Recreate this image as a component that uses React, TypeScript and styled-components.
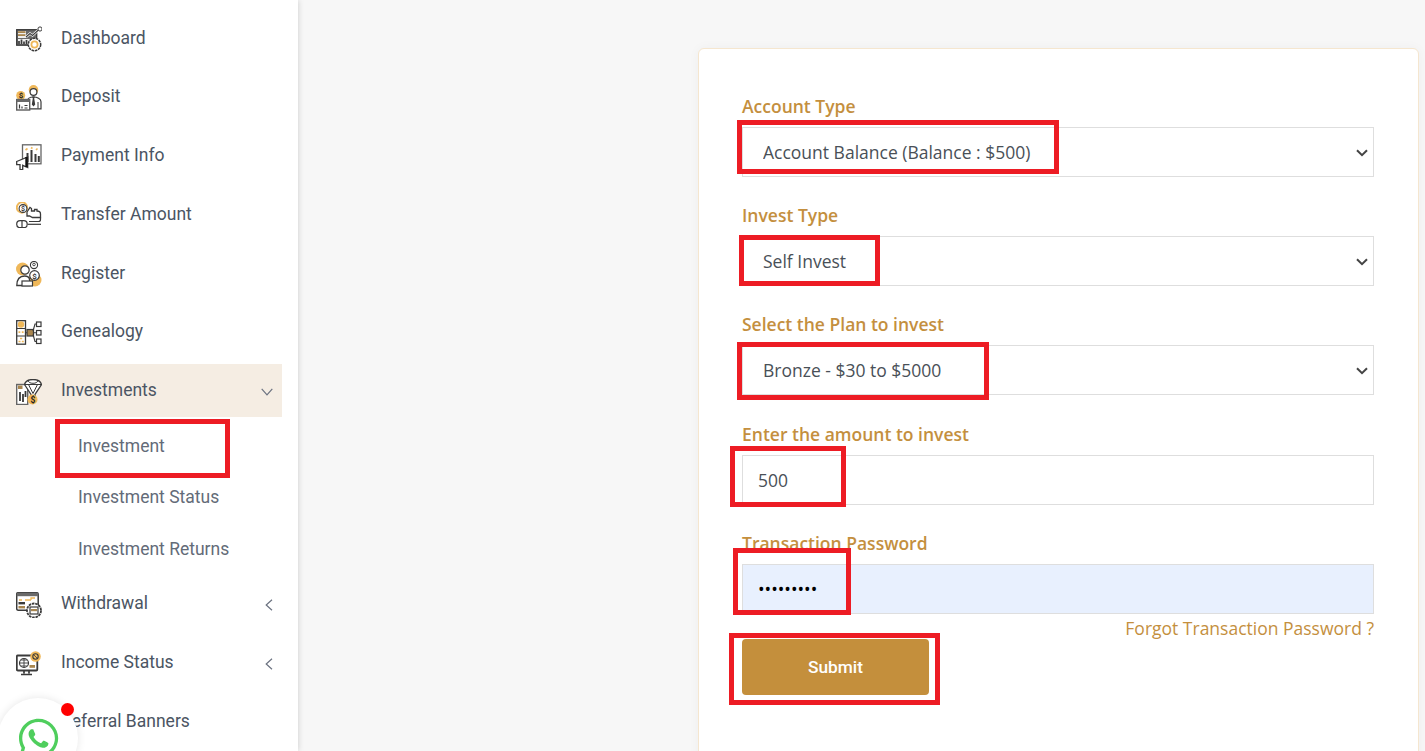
import React from "react";
import styled, { createGlobalStyle } from "styled-components";
import { FaWhatsapp } from "react-icons/fa";

const DARK = "#3a3a3a";
const GREY = "#5c5c5c";
const GOLD = "#efb85a";
const TAN = "#a9864f";

const DashboardIcon = () => (
  <IconSvg viewBox="0 0 26 26">
    <rect x="0.700" y="3.700" width="20" height="15.500" fill="#6a6a6a" stroke={DARK} strokeWidth="1.300" />
    <rect x="2" y="5" width="8" height="7" fill="#eee" />
    <rect x="2" y="5.200" width="7.500" height="1.800" fill={TAN} />
    <rect x="2" y="8.200" width="7.500" height="1.800" fill={TAN} />
    <rect x="2" y="13" width="12" height="5" fill="#eee" />
    <path d="M3 18v-3M5.500 18v-4.500M8 18v-2.500M10.500 18v-4" stroke={DARK} strokeWidth="1.700" />
    <path d="M10 11l4-3.500 2.500 2L23 3.500" fill="none" stroke="#fff" strokeWidth="2.400" />
    <path d="M10 11l4-3.500 2.500 2L23 3.500" fill="none" stroke={DARK} strokeWidth="1.100" />
    <circle cx="24" cy="3" r="2.100" fill="#fff" stroke={DARK} />
    <circle cx="18.500" cy="18.500" r="6.200" fill="#fff" stroke={DARK} strokeWidth="1.500" strokeDasharray="2.600 .7" />
    <circle cx="18.500" cy="18.500" r="3.100" fill="#fff" stroke={GOLD} strokeWidth="1.800" />
  </IconSvg>
);

const DepositIcon = () => (
  <IconSvg viewBox="0 0 26 26">
    <circle cx="4.700" cy="10.500" r="4.500" fill={GOLD} />
    <text x="2.700" y="13.300" fontSize="8" fontWeight="700" fill="#222" fontFamily="Roboto, sans-serif">$</text>
    <circle cx="17.500" cy="4.800" r="4.800" fill={GOLD} />
    <circle cx="17.500" cy="7" r="3.400" fill="#fff" stroke={DARK} strokeWidth="1.200" />
    <path d="M11 23.800v-7c0-3 3-4.800 6.500-4.800s7.500 1.800 7.500 4.800v7z" fill="#fff" stroke={DARK} strokeWidth="1.200" />
    <path d="M16 11.500h3l-.8 2 1 6-1.700 2-1.700-2 1-6z" fill={DARK} />
    <path d="M22 17v6.500" stroke={DARK} />
    <rect x="0.700" y="14.500" width="13" height="10.500" fill="#fff" stroke={GREY} strokeWidth="1.400" />
    <rect x="0.700" y="14.500" width="13" height="2.500" fill="#6a6a6a" />
    <path d="M3.500 23.500v-4M6 23.500v-2M8.500 23h3M8.500 20.500h3" stroke={DARK} strokeWidth="1.200" />
  </IconSvg>
);

const PaymentIcon = () => (
  <IconSvg viewBox="0 0 26 26">
    <rect x="6.500" y="0.800" width="18.500" height="19" fill="#fff" stroke="#666" strokeWidth="1.300" />
    <path d="M11.500 18V9M15.500 18V6M19.500 18v-8M22.800 18v-6" stroke={DARK} strokeWidth="2" />
    <path d="M9.500 6l2-1.500M15 3.500l1.500 1M20 6l1.500-1.500" stroke={GOLD} strokeWidth="1.600" />
    <path d="M0.700 17.500l11-4.500v10.500l-5-2.200v4.400H4v-5H0.700z" fill="#fff" stroke={DARK} strokeWidth="1.300" />
    <path d="M10.500 13v10" stroke="#111" strokeWidth="2.400" />
  </IconSvg>
);

const TransferIcon = () => (
  <IconSvg viewBox="0 0 26 26">
    <circle cx="6" cy="5.500" r="5.200" fill="#fff" stroke={GOLD} strokeWidth="1.900" />
    <circle cx="7" cy="6.500" r="3.900" fill="#fff" stroke={DARK} strokeWidth="1.100" />
    <text x="5" y="9.200" fontSize="7" fontWeight="500" fill="#222" fontFamily="Roboto, sans-serif">$</text>
    <path d="M11 10l3-4.500 1.500 1V9h3V7.500h2.500V9c2.500 0 3.500 1 3.500 3v3.500h-8l-3-1.500h-2.500z" fill="#fff" stroke={DARK} strokeWidth="1.300" />
    <path d="M24.500 15.500v2c0 1.500-1 2-2 2H13" fill="none" stroke={DARK} strokeWidth="1.200" />
    <path d="M11.500 22.300H25" stroke={DARK} strokeWidth="1.200" />
    <rect x="0.700" y="18.700" width="10.500" height="7" rx="3.500" fill="#fff" stroke={DARK} strokeWidth="1.200" />
    <path d="M6 18.700v7" stroke={DARK} strokeWidth="1.200" />
  </IconSvg>
);

const RegisterIcon = () => (
  <IconSvg viewBox="0 0 26 26">
    <circle cx="6.500" cy="8" r="6.500" fill={GOLD} />
    <circle cx="19" cy="19" r="6.500" fill={GOLD} />
    <circle cx="9" cy="9" r="4.200" fill="#fff" stroke={DARK} strokeWidth="1.200" />
    <path d="M0.800 24.500c0-6 3-9.500 8-9.500s5 3 5 9.500z" fill="#fff" stroke={DARK} strokeWidth="1.300" />
    <rect x="6" y="20" width="10.500" height="5" fill="#fff" stroke={DARK} strokeWidth="1.200" />
    <circle cx="18" cy="4" r="3.600" fill="#fff" stroke={DARK} strokeWidth="1.100" />
    <circle cx="18" cy="3.500" r="1.300" fill="none" stroke={DARK} strokeWidth=".9" />
    <circle cx="18.500" cy="14.500" r="4.800" fill="#fff" stroke={DARK} strokeWidth="1.200" />
    <text x="16.300" y="17.500" fontSize="8" fontWeight="500" fill="#222" fontFamily="Roboto, sans-serif">$</text>
  </IconSvg>
);

const GenealogyIcon = () => (
  <IconSvg viewBox="0 0 26 26">
    <rect x="0.700" y="0.700" width="8.800" height="23.500" fill="#fff" stroke={DARK} strokeWidth="1.300" />
    <path d="M0.700 8.500h8.800M0.700 16h8.800" stroke={DARK} strokeWidth="1.200" />
    <circle cx="5" cy="4.500" r="3.200" fill={GOLD} />
    <path d="M2.500 12.200h1.800M5.800 12.200h1.800M4 18.500h2.200M2.500 21.500h2M5.800 21.500h2" stroke={GOLD} strokeWidth="1.700" />
    <rect x="11" y="9.500" width="6.500" height="6.500" fill={TAN} stroke={DARK} strokeWidth="1.200" />
    <path d="M9 12.700h2M17 12.700h3.500M17 11l2-7h1.500M17 14.500l2 7h1.500" fill="none" stroke={DARK} strokeWidth="1.100" />
    <rect x="20.500" y="2" width="4.500" height="4.500" fill="#fff" stroke={DARK} strokeWidth="1.200" />
    <rect x="20.500" y="10.500" width="4.500" height="4.500" fill="#fff" stroke={DARK} strokeWidth="1.200" />
    <rect x="20.500" y="19" width="4.500" height="4.500" fill="#fff" stroke={DARK} strokeWidth="1.200" />
  </IconSvg>
);

const InvestmentsIcon = () => (
  <IconSvg viewBox="0 0 26 26">
    <rect x="0.700" y="5.500" width="11" height="20" fill="#fff" stroke="#666" strokeWidth="1.400" />
    <rect x="2" y="6.500" width="4.500" height="3.500" fill={TAN} />
    <path d="M4 13v9M7 15v8M9.500 12v6" stroke={DARK} strokeWidth="1.800" />
    <path d="M8.500 5.500c1-4 5-5 8.500-5s7.500 1 8.500 5l-6.500 10v4h-4v-4z" fill="#fff" stroke={DARK} strokeWidth="1.300" />
    <path d="M8.500 5.500h17M12.500 5.500l4.500 9 4.500-9M12 1.800c1 1.500 2 2.500 5 2.500s4-1 5-2.500" fill="none" stroke={DARK} strokeWidth="1" />
    <circle cx="16.500" cy="20.500" r="5" fill={GOLD} />
    <text x="14.400" y="23.500" fontSize="8.500" fontWeight="700" fill="#222" fontFamily="Roboto, sans-serif">$</text>
  </IconSvg>
);

const WithdrawalIcon = () => (
  <IconSvg viewBox="0 0 26 26">
    <rect x="0.700" y="0.700" width="21.500" height="17.500" rx="1.500" fill="#fff" stroke={DARK} strokeWidth="1.500" />
    <rect x="0.700" y="0.700" width="21.500" height="3.500" fill="#6a6a6a" />
    <path d="M3 8h3M9 8h6M15 8V6h4" fill="none" stroke={GOLD} strokeWidth="1.300" />
    <rect x="2.500" y="10" width="6.500" height="2.400" fill={DARK} />
    <rect x="2.500" y="14" width="6.500" height="2.400" fill={TAN} />
    <circle cx="18" cy="18.500" r="7" fill="#fff" stroke={DARK} strokeWidth="1.800" strokeDasharray="2.600 .8" />
    <rect x="14" y="15" width="8" height="7" fill="#fff" stroke={DARK} strokeWidth="1.200" />
    <rect x="15" y="17" width="6" height="2.200" fill={TAN} />
  </IconSvg>
);

const IncomeIcon = () => (
  <IconSvg viewBox="0 0 26 26">
    <rect x="0.800" y="4.500" width="20.500" height="15" rx="1" fill="#fff" stroke={DARK} strokeWidth="1.800" />
    <circle cx="8" cy="12" r="4.500" fill="none" stroke={DARK} strokeWidth="1.200" />
    <path d="M3.500 12h9M8 7.500v9M5 9h6M5 15h6" stroke={DARK} strokeWidth=".9" />
    <rect x="13.500" y="14" width="5.500" height="2.800" fill={TAN} />
    <path d="M8 19.500v3M13 19.500v3M5 23.500h11" stroke={DARK} strokeWidth="1.700" />
    <circle cx="19.500" cy="5.500" r="5.300" fill={GOLD} />
    <circle cx="19.500" cy="5.500" r="2.700" fill="none" stroke={DARK} strokeWidth="1.100" />
    <path d="M18 4l3 3" stroke={DARK} strokeWidth=".8" />
  </IconSvg>
);

const ChevronDown = () => (
  <ChevronSvg viewBox="0 0 12 8" $w={12} $h={8}>
    <path d="M0.700 0.800L6 6.800l5.300-6" />
  </ChevronSvg>
);

const ChevronLeft = () => (
  <ChevronSvg viewBox="0 0 8 12" $w={8} $h={12}>
    <path d="M7 0.800L1.200 6 7 11.200" />
  </ChevronSvg>
);

const SelectField: React.FC<{ label: string; option: string }> = ({ label, option }) => (
  <Field>
    <Label>{label}</Label>
    <SelectWrap>
      <Select defaultValue={option}>
        <option value={option}>{option}</option>
      </Select>
      <SelectArrow viewBox="0 0 12 8">
        <path d="M1 1.200l5 5 5-5" />
      </SelectArrow>
    </SelectWrap>
  </Field>
);

const beforeSub = [
  { label: "Dashboard", icon: <DashboardIcon /> },
  { label: "Deposit", icon: <DepositIcon /> },
  { label: "Payment Info", icon: <PaymentIcon /> },
  { label: "Transfer Amount", icon: <TransferIcon /> },
  { label: "Register", icon: <RegisterIcon /> },
  { label: "Genealogy", icon: <GenealogyIcon /> },
];

const subItems = ["Investment", "Investment Status", "Investment Returns"];

const marks = [
  { x: 55, y: 419, w: 175, h: 59 },
  { x: 737, y: 120, w: 322, h: 54 },
  { x: 739, y: 235, w: 141, h: 51 },
  { x: 737, y: 342, w: 252, h: 58 },
  { x: 730, y: 446, w: 116, h: 61 },
  { x: 733, y: 548, w: 118, h: 67 },
  { x: 729, y: 633, w: 211, h: 72 },
];

const App: React.FC = () => {
  return (
    <Page>
      <GlobalStyle />
      <Sidebar>
        {beforeSub.map((item) => (
          <NavRow key={item.label}>
            <IconSlot>{item.icon}</IconSlot>
            <NavLabel>{item.label}</NavLabel>
          </NavRow>
        ))}
        <NavRow $active>
          <IconSlot>
            <InvestmentsIcon />
          </IconSlot>
          <NavLabel>Investments</NavLabel>
          <ChevronDown />
        </NavRow>
        <SubList>
          {subItems.map((item) => (
            <SubItem key={item}>{item}</SubItem>
          ))}
        </SubList>
        <NavRow>
          <IconSlot>
            <WithdrawalIcon />
          </IconSlot>
          <NavLabel>Withdrawal</NavLabel>
          <ChevronLeft />
        </NavRow>
        <NavRow>
          <IconSlot>
            <IncomeIcon />
          </IconSlot>
          <NavLabel>Income Status</NavLabel>
          <ChevronLeft />
        </NavRow>
        <NavRow>
          <IconSlot />
          <NavLabel>Referral Banners</NavLabel>
        </NavRow>
      </Sidebar>

      <Main>
        <Card>
          <SelectField label="Account Type" option="Account Balance (Balance : $500)" />
          <SelectField label="Invest Type" option="Self Invest" />
          <SelectField label="Select the Plan to invest" option="Bronze - $30 to $5000" />
          <Field>
            <Label>Enter the amount to invest</Label>
            <Input type="text" defaultValue="500" />
          </Field>
          <Field $last>
            <Label>Transaction Password</Label>
            <Input type="password" defaultValue="123456789" $filled />
          </Field>
          <Forgot>Forgot Transaction Password ?</Forgot>
          <Submit type="button">Submit</Submit>
        </Card>
      </Main>

      {marks.map((m) => (
        <RedMark key={m.x + "-" + m.y} $x={m.x} $y={m.y} $w={m.w} $h={m.h} />
      ))}

      <ChatBubble>
        <FaWhatsapp size={45} color="#4fce5d" />
      </ChatBubble>
      <ChatDot />
    </Page>
  );
};

export default App;

const GlobalStyle = createGlobalStyle`
  html, body {
    margin: 0;
    padding: 0;
    background: #f7f7f7;
  }
  * {
    box-sizing: border-box;
  }
`;

const Page = styled.div`
  position: relative;
  display: flex;
  width: 1425px;
  height: 751px;
  overflow: hidden;
  background: #f7f7f7;
`;

const Sidebar = styled.aside`
  flex: none;
  width: 298px;
  padding: 11px 16px 0 0;
  background: #fff;
  box-shadow: 0 0 6px rgba(0, 0, 0, 0.18);
  z-index: 1;
`;

const NavRow = styled.div<{ $active?: boolean }>`
  display: flex;
  align-items: center;
  height: 53px;
  margin-bottom: ${(p) => (p.$active ? "0" : "5.800px")};
  padding-left: 16px;
  background: ${(p) => (p.$active ? "#f5ede3" : "transparent")};
`;

const IconSlot = styled.span`
  display: flex;
  flex: none;
  width: 45px;
  margin-top: 3px;
`;

const IconSvg = styled.svg`
  display: block;
  width: 26px;
  height: 26px;
`;

const NavLabel = styled.span`
  flex: 1;
  padding-top: 1.500px;
  font: 400 17.500px/1 Roboto, sans-serif;
  color: #4b5563;
`;

const ChevronSvg = styled.svg<{ $w: number; $h: number }>`
  flex: none;
  width: ${(p) => p.$w}px;
  height: ${(p) => p.$h}px;
  margin: 4px 9px 0 0;
  fill: none;
  stroke: #6b7280;
  stroke-width: 1.200;
`;

const SubList = styled.div`
  padding: 3px 0 2.500px;
`;

const SubItem = styled.div`
  display: flex;
  align-items: center;
  height: 51.500px;
  padding: 2px 0 0 78px;
  font: 400 17.500px/1 Roboto, sans-serif;
  color: #636b78;
`;

const Main = styled.main`
  flex: 1;
  padding: 48px 6px 0 400px;
`;

const Card = styled.section`
  height: 760px;
  padding: 46px 44px 0 43px;
  background: #fff;
  border: 1px solid #f5e6cf;
  border-radius: 6px;
  box-shadow: 0 0 12px rgba(0, 0, 0, 0.04);
`;

const Field = styled.div<{ $last?: boolean }>`
  margin-bottom: ${(p) => (p.$last ? "0" : "27.200px")};
`;

const Label = styled.label`
  display: block;
  height: 25px;
  margin-bottom: 7px;
  font: 600 17.500px/23.600px "Open Sans", sans-serif;
  color: #c48f3e;
`;

const SelectWrap = styled.div`
  position: relative;
`;

const Select = styled.select`
  display: block;
  width: 100%;
  height: 50px;
  padding: 0 32px 0 20px;
  font: 400 17.500px "Open Sans", sans-serif;
  color: #495057;
  background: #fff;
  border: 1px solid #dedede;
  border-radius: 0;
  outline: none;
  appearance: none;
`;

const SelectArrow = styled.svg`
  position: absolute;
  right: 6px;
  top: 22px;
  width: 12px;
  height: 8px;
  fill: none;
  stroke: #444;
  stroke-width: 2;
  pointer-events: none;
`;

const Input = styled.input<{ $filled?: boolean }>`
  display: block;
  width: 100%;
  height: 50px;
  padding: 0 15px;
  font: 400 17.500px "Open Sans", sans-serif;
  color: ${(p) => (p.$filled ? "#000" : "#495057")};
  background: ${(p) => (p.$filled ? "#e8f0fe" : "#fff")};
  border: 1px solid #dedede;
  border-radius: 0;
  outline: none;
`;

const Forgot = styled.div`
  margin-top: 4px;
  font: 400 17.500px/20px "Open Sans", sans-serif;
  color: #c48f3e;
  text-align: right;
`;

const Submit = styled.button`
  display: block;
  width: 187px;
  height: 56px;
  margin-top: 1px;
  padding: 0;
  font: 500 17.300px Roboto, sans-serif;
  color: #fff;
  background: #c48f3c;
  border: none;
  border-radius: 4px;
`;

const RedMark = styled.div<{ $x: number; $y: number; $w: number; $h: number }>`
  position: absolute;
  left: ${(p) => p.$x}px;
  top: ${(p) => p.$y}px;
  width: ${(p) => p.$w}px;
  height: ${(p) => p.$h}px;
  border: 5px solid #ed1c24;
  z-index: 2;
`;

const ChatBubble = styled.div`
  position: absolute;
  left: -2px;
  top: 698px;
  display: flex;
  justify-content: center;
  width: 80px;
  height: 80px;
  padding-top: 18px;
  background: #fff;
  border-radius: 50%;
  box-shadow: 0 0 8px rgba(0, 0, 0, 0.1);
  z-index: 3;
`;

const ChatDot = styled.span`
  position: absolute;
  left: 61px;
  top: 703px;
  width: 13px;
  height: 13px;
  background: #f00;
  border-radius: 50%;
  z-index: 4;
`;
